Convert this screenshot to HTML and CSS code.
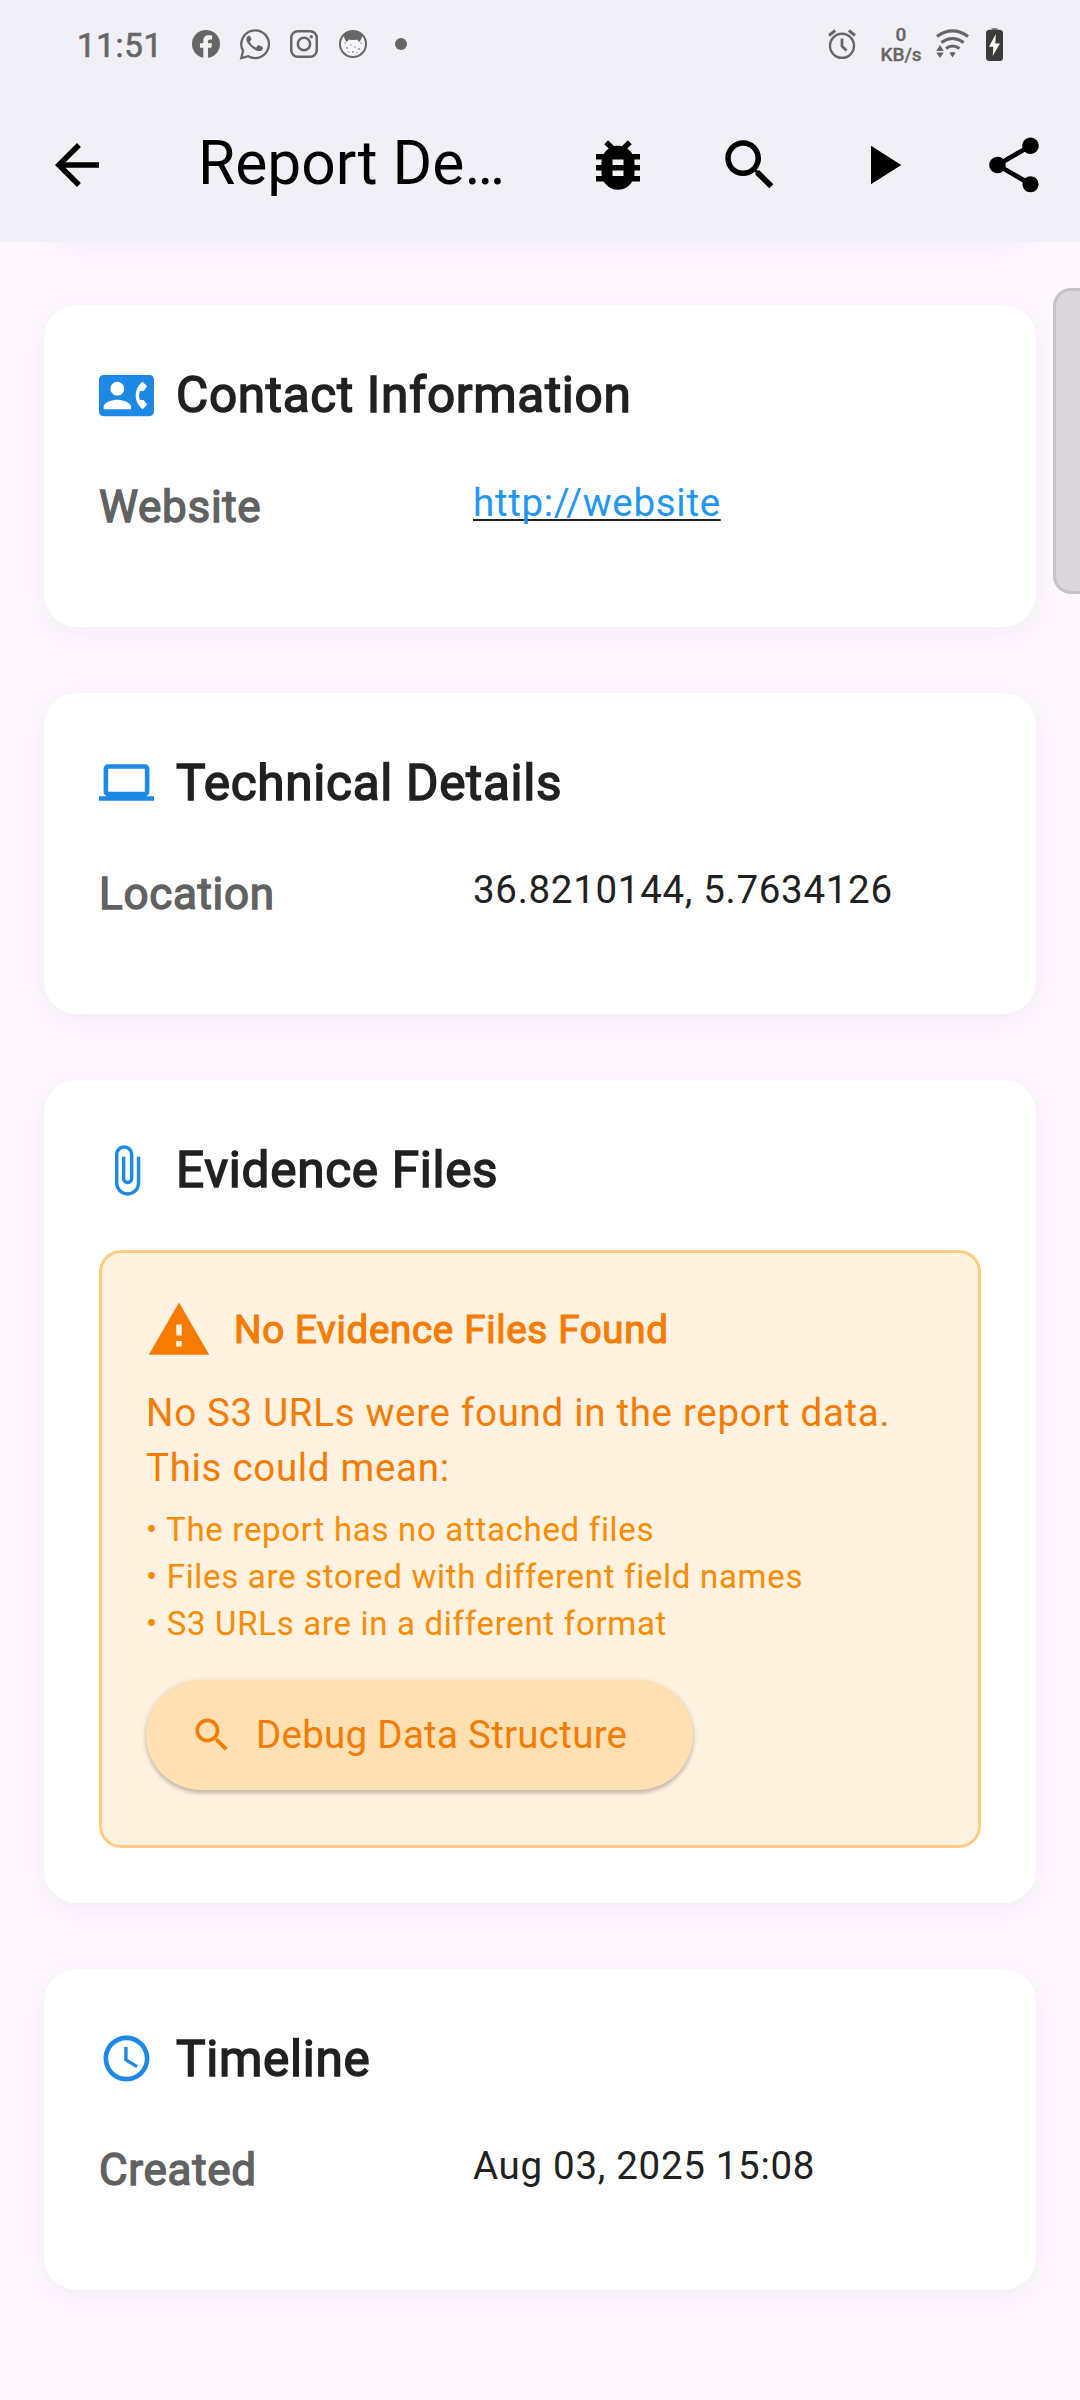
FILE: index.html
```html
<!DOCTYPE html>
<html lang="en">
<head>
<meta charset="utf-8">
<title>Report Details</title>
<link rel="stylesheet" href="styles.css">
</head>
<body>
<div class="screen">
  <header class="top">
    <div class="status">
      <span class="status-time">11:51</span>
      <div class="status-apps">
        <svg class="app-fb" viewBox="0 0 28 28"><circle cx="14" cy="14" r="14" fill="#666"/><path d="M11.300 28.500V17.800H8v-4.600h3.300v-2.300c0-3.700 2-5.600 5.200-5.600 1.400 0 2.500.1 3.600.3v4h-2c-1.500 0-2.100.8-2.100 2v1.600h4l-.7 4.600H16v10.700z" fill="#f2f0f7"/></svg>
        <svg class="app-wa" viewBox="0 0 32 32"><path d="M2.200 30.200l1.900-7.200A13.800 13.800 0 1 1 9.300 28.200z" fill="none" stroke="#666" stroke-width="2.300"/><path d="M11.200 8.500c-.4-.8-.8-.8-1.200-.8-1.300 0-2.600 1.400-2.600 3.700 0 1.600 1.100 4 4 6.900 3.200 3.200 6.500 4.800 8.800 4.800 2.200 0 3.700-1.500 3.700-3.200 0-.8-.2-.9-.7-1.200l-3.200-1.500c-.5-.2-.8-.2-1.200.3l-1.400 1.700c-.3.300-.6.300-1 .1-2.400-1.100-4.300-2.900-5.400-5-.2-.4-.1-.7.1-1l1.200-1.500c.2-.3.200-.6.100-1z" fill="#666"/></svg>
        <svg class="app-ig" viewBox="0 0 28 28" fill="none" stroke="#666" stroke-width="2.500"><rect x="1.250" y="1.250" width="25.500" height="25.500" rx="6.500"/><circle cx="14" cy="14" r="6.200"/><circle cx="21.300" cy="6.700" r="1.700" fill="#666" stroke="none"/></svg>
        <svg class="app-cat" viewBox="0 0 28 28"><circle cx="14" cy="14" r="13" fill="#f8f6fb" stroke="#666" stroke-width="2"/><path d="M5 4.500Q14-2 23 4.500c.3 3-.8 5.500-2.800 7.500l-2.200-2.600q-4 1.400-8 0L7.800 12C5.800 10 4.700 7.500 5 4.500z" fill="#666"/><g fill="#888"><circle cx="6" cy="13" r=".8"/><circle cx="8" cy="18" r=".9"/><circle cx="12" cy="15" r=".7"/><circle cx="16" cy="17" r=".8"/><circle cx="20" cy="19" r=".9"/><circle cx="22" cy="13" r=".8"/><circle cx="14" cy="22" r=".9"/><circle cx="10" cy="22" r=".7"/><circle cx="18" cy="22.500" r=".7"/></g></svg>
        <span class="app-dot"></span>
      </div>
      <div class="status-right">
        <svg class="st-alarm" viewBox="0 0 28 30" fill="none" stroke="#666"><circle cx="14" cy="16.800" r="12" stroke-width="2.400"/><path d="M14 9.500v7.700l4.500 4.300" stroke-width="2.800"/><path d="M1 6.500L7.200 1.500M27 6.500L20.800 1.500" stroke-width="2.900"/></svg>
        <div class="st-net"><span>0</span><span>KB/s</span></div>
        <svg class="st-wifi" viewBox="0 0 33 30"><g fill="none" stroke="#666" stroke-width="3"><path d="M.9 7.500Q16.500-3.800 32.100 7.500"/><path d="M5.300 13.500Q16.500 5.500 27.700 13.500"/><path d="M10 19.500Q16.500 14.500 23.500 19.500"/></g><path d="M13.300 23.800q3.200-1.700 6.400 0l-3.200 4.700zM.2 22l3.800-6 3.800 6zM.2 23.500h7.600L4 29z" fill="#666"/></svg>
        <svg class="st-batt" viewBox="0 0 17 33"><path d="M5.500 0h6v3h-6z" fill="#888"/><rect y="1.800" width="17" height="31.200" rx="3.500" fill="#3b3b3b"/><path d="M9.800 6L3 18.800h4.300l-.6 9.200L14 15.500H9.300z" fill="#fff"/></svg>
      </div>
    </div>
    <div class="appbar">
      <svg class="ic24" viewBox="0 0 24 24"><path d="M20 11H7.830l5.590-5.590L12 4l-8 8 8 8 1.410-1.410L7.830 13H20v-2z"/></svg>
      <h1 class="appbar-title">Report De…</h1>
      <div class="actions">
        <svg class="ic24" viewBox="0 0 24 24"><path d="M20 8h-2.810c-.45-.78-1.070-1.450-1.820-1.960L17 4.410 15.590 3l-2.170 2.170C12.960 5.060 12.490 5 12 5c-.49 0-.96.060-1.410.170L8.410 3 7 4.410l1.620 1.630C7.880 6.550 7.260 7.220 6.810 8H4v2h2.090c-.050.330-.090.660-.090 1v1H4v2h2v1c0 .340.040.670.090 1H4v2h2.810c1.040 1.790 2.970 3 5.190 3s4.150-1.210 5.190-3H20v-2h-2.090c.050-.330.090-.660.090-1v-1h2v-2h-2v-1c0-.340-.040-.670-.090-1H20V8zm-6 8h-4v-2h4v2zm0-4h-4v-2h4v2z"/></svg>
        <svg class="ic24" viewBox="0 0 24 24"><path d="M15.500 14h-.79l-.28-.27C15.410 12.590 16 11.110 16 9.500 16 5.910 13.090 3 9.500 3S3 5.910 3 9.500 5.910 16 9.500 16c1.610 0 3.090-.59 4.230-1.570l.27.28v.79l5 4.990L20.490 19l-4.990-5zm-6 0C7.010 14 5 11.990 5 9.500S7.010 5 9.500 5 14 7.010 14 9.500 11.990 14 9.500 14z"/></svg>
        <svg class="ic24" viewBox="0 0 24 24"><path d="M8 5v14l11-7z"/></svg>
        <svg class="ic24" viewBox="0 0 24 24"><path d="M18 16.080c-.76 0-1.440.3-1.960.77L8.910 12.700c.050-.230.090-.460.090-.7s-.040-.470-.090-.7l7.050-4.110c.54.5 1.250.81 2.040.81 1.660 0 3-1.340 3-3s-1.340-3-3-3-3 1.340-3 3c0 .240.040.470.090.7L8.040 9.810C7.500 9.310 6.790 9 6 9c-1.660 0-3 1.340-3 3s1.340 3 3 3c.79 0 1.500-.31 2.040-.81l7.120 4.160c-.050.210-.080.430-.080.650 0 1.610 1.310 2.920 2.920 2.920s2.920-1.310 2.920-2.920-1.310-2.920-2.920-2.920z"/></svg>
      </div>
    </div>
  </header>

  <main class="list">
    <section class="card card-above"></section>

    <section class="card">
      <div class="card-head">
        <svg class="ic20" viewBox="0 0 24 24"><path d="M22 3H2C.9 3 0 3.900 0 5v14c0 1.100.9 2 2 2h20c1.100 0 1.990-.9 1.990-2L24 5c0-1.100-.9-2-2-2zM8 6c1.660 0 3 1.340 3 3s-1.340 3-3 3-3-1.340-3-3 1.340-3 3-3zm6 12H2v-1c0-2 4-3.100 6-3.100s6 1.100 6 3.100v1zm3.850-4h1.640L21 16l-1.990 1.990c-1.310-.98-2.280-2.380-2.730-3.990-.18-.640-.28-1.310-.28-2s.1-1.360.28-2c.45-1.620 1.420-3.010 2.730-3.990L21 8l-1.510 2h-1.640c-.22.63-.35 1.300-.35 2s.13 1.370.35 2z"/></svg>
        <h2 class="card-title">Contact Information</h2>
      </div>
      <div class="row"><span class="label">Website</span><a class="value link">http://website</a></div>
    </section>

    <section class="card">
      <div class="card-head">
        <svg class="ic20" viewBox="0 0 24 24"><path d="M20 18c1.100 0 1.990-.9 1.990-2L22 6c0-1.100-.9-2-2-2H4c-1.100 0-2 .9-2 2v10c0 1.100.9 2 2 2H0v2h24v-2h-4zM4 6h16v10H4V6z"/></svg>
        <h2 class="card-title">Technical Details</h2>
      </div>
      <div class="row"><span class="label">Location</span><span class="value">36.8210144, 5.7634126</span></div>
    </section>

    <section class="card">
      <div class="card-head">
        <svg class="ic20" viewBox="0 0 24 24"><path d="M16.500 6v11.500c0 2.210-1.790 4-4 4s-4-1.790-4-4V5c0-1.380 1.120-2.500 2.500-2.500s2.500 1.120 2.500 2.500v10.500c0 .55-.45 1-1 1s-1-.45-1-1V6H10v9.500c0 1.380 1.120 2.500 2.500 2.500s2.500-1.120 2.500-2.500V5c0-2.210-1.790-4-4-4S7 2.790 7 5v12.500c0 3.040 2.460 5.500 5.500 5.500s5.500-2.460 5.500-5.500V6h-1.500z"/></svg>
        <h2 class="card-title">Evidence Files</h2>
      </div>
      <div class="notice">
        <div class="notice-head">
          <svg class="ic24" viewBox="0 0 24 24"><path d="M1 21h22L12 2 1 21zm12-3h-2v-2h2v2zm0-4h-2v-4h2v4z"/></svg>
          <h3 class="notice-title">No Evidence Files Found</h3>
        </div>
        <p class="notice-text">No S3 URLs were found in the report data.<br>This could mean:</p>
        <div class="bullets">
          <span>• The report has no attached files</span>
          <span>• Files are stored with different field names</span>
          <span>• S3 URLs are in a different format</span>
        </div>
        <button class="debug">
          <svg class="ic16" viewBox="0 0 24 24"><path d="M15.500 14h-.79l-.28-.27C15.410 12.590 16 11.110 16 9.500 16 5.910 13.090 3 9.500 3S3 5.910 3 9.500 5.910 16 9.500 16c1.610 0 3.090-.59 4.230-1.570l.27.28v.79l5 4.990L20.490 19l-4.990-5zm-6 0C7.010 14 5 11.990 5 9.500S7.010 5 9.500 5 14 7.010 14 9.500 11.990 14 9.500 14z"/></svg>
          <span>Debug Data Structure</span>
        </button>
      </div>
    </section>

    <section class="card">
      <div class="card-head">
        <svg class="ic20" viewBox="0 0 24 24"><path d="M11.990 2C6.470 2 2 6.480 2 12s4.470 10 9.990 10C17.520 22 22 17.520 22 12S17.520 2 11.990 2zM12 20c-4.420 0-8-3.580-8-8s3.580-8 8-8 8 3.580 8 8-3.580 8-8 8zm.5-13H11v6l5.250 3.150.75-1.230-4.500-2.670z"/></svg>
        <h2 class="card-title">Timeline</h2>
      </div>
      <div class="row"><span class="label">Created</span><span class="value">Aug 03, 2025 15:08</span></div>
    </section>
  </main>
  <div class="scrollbar"></div>
</div>
</body>
</html>
```
FILE: styles.css
```css
* { box-sizing: border-box; }
body { margin: 0; font-family: Roboto, "Liberation Sans", sans-serif; }
h1, h2, h3, p { margin: 0; font-weight: 400; }
svg { display: block; flex: none; }

.screen {
  position: relative;
  width: 1080px;
  height: 2400px;
  overflow: hidden;
  background: #fef7ff;
}

/* status bar and app bar */
.top { position: relative; z-index: 1; height: 242px; background: #f2f0f7; }
.status { display: flex; align-items: center; height: 88px; padding: 0 77px 0 77px; color: #666; }
.status-time { width: 115px; font-size: 33px; letter-spacing: 0.700px; line-height: 88px; -webkit-text-stroke: 0.700px; padding-top: 3px; }
.status-apps { display: flex; align-items: center; }
.app-fb { width: 28px; height: 28px; margin-right: 19px; }
.app-wa { width: 32px; height: 32px; margin-right: 19px; }
.app-ig { width: 28px; height: 28px; margin-right: 21px; }
.app-cat { width: 28px; height: 28px; margin-right: 28px; }
.app-dot { width: 12px; height: 12px; border-radius: 50%; background: #666; }
.status-right { display: flex; align-items: center; margin-left: auto; }
.st-alarm { width: 28px; height: 30px; margin-right: 23px; }
.st-net { display: flex; flex-direction: column; align-items: center; width: 44px; margin-right: 13px; font-size: 19px; font-weight: 500; line-height: 20px; padding-top: 1px; -webkit-text-stroke: 0.300px; }
.st-wifi { width: 33px; height: 30px; margin-right: 17px; }
.st-batt { width: 17px; height: 33px; }

.appbar { display: flex; align-items: center; height: 154px; padding: 0 33px 0 44px; }
.appbar-title { margin-left: 88px; padding-bottom: 3px; font-size: 60.500px; line-height: 77px; color: #000; }
.actions { display: flex; gap: 66px; margin-left: auto; }
.ic24 { width: 66px; height: 66px; }
.ic20 { width: 55px; height: 55px; fill: #1e88e5; }
.ic16 { width: 44px; height: 44px; fill: #f57c00; }

/* cards */
.list { display: flex; flex-direction: column; gap: 66px; padding: 0 44px; }
.card {
  padding: 55px;
  background: #fff;
  border-radius: 33px;
  box-shadow: 0 5.500px 27.500px rgba(0, 0, 0, 0.05);
}
.card-above { height: 110px; padding: 0; margin-top: -113px; }
.card-head { display: flex; align-items: center; gap: 22px; height: 70.500px; margin-bottom: 44px; }
.card-title { font-size: 49.500px; letter-spacing: 0.690px; color: #212121; -webkit-text-stroke: 1.500px; }
.row { display: flex; align-items: flex-start; padding-bottom: 33px; }
.label { width: 374px; font-size: 44px; line-height: 64px; letter-spacing: 0.690px; color: #616161; -webkit-text-stroke: 1.400px; }
.value { font-size: 38.500px; line-height: 55px; letter-spacing: 0.690px; color: #212121; }
.link {
  color: #2196f3;
  text-decoration: underline #212121 2px;
  text-decoration-skip-ink: none;
  text-underline-offset: 3px;
}

/* missing evidence notice */
.notice {
  padding: 44px;
  border: 3px solid #ffcc80;
  border-radius: 22px;
  background: #fff2e0;
  color: #f57c00;
}
.notice-head { display: flex; align-items: center; gap: 22px; fill: #f57c00; }
.notice-title { font-size: 38.500px; letter-spacing: 0.690px; -webkit-text-stroke: 1.200px; }
.notice-text { margin-top: 22px; font-size: 38.500px; line-height: 55px; letter-spacing: 0.690px; }
.bullets { display: flex; flex-direction: column; margin-top: 11px; font-size: 33px; line-height: 47px; letter-spacing: 0.690px; color: #fb8c00; }
.debug {
  display: flex;
  align-items: center;
  gap: 22px;
  height: 110px;
  margin: 33px 0 11px;
  padding: 0 66px 0 44px;
  border: 0;
  border-radius: 55px;
  background: #ffe0b2;
  color: #f57c00;
  font: 400 38.500px/55px Roboto, "Liberation Sans", sans-serif;
  letter-spacing: 0.275px;
  box-shadow: 0 3px 4px rgba(0, 0, 0, 0.2), 0 1px 6px rgba(0, 0, 0, 0.1);
}

.scrollbar {
  position: absolute;
  top: 288px;
  right: 0;
  width: 27px;
  height: 306px;
  border: 3px solid #c6c2c8;
  border-right: 0;
  border-radius: 18px 0 0 18px;
  background: #dbd7dd;
}
```
